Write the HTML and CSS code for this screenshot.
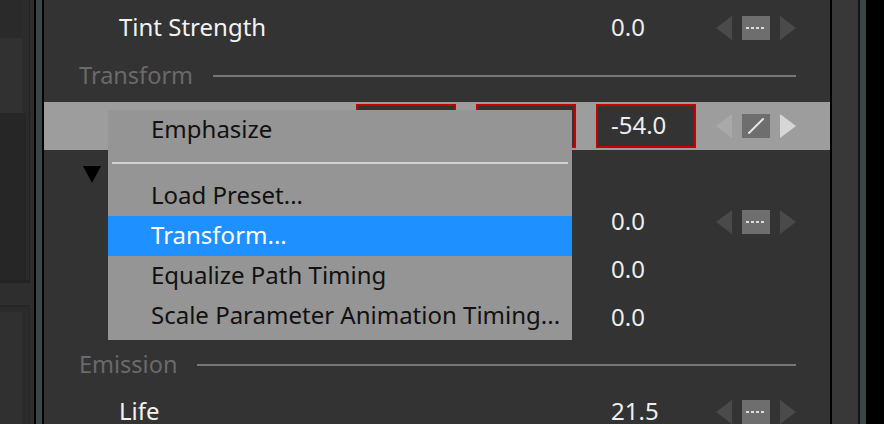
FILE: index.html
```html
<!DOCTYPE html>
<html>
<head>
<meta charset="utf-8">
<link rel="stylesheet" href="styles.css">
</head>
<body>
<div class="app">
  <div class="left-strip">
    <div class="ls-top">
      <div class="ls-top-inner">
        <div class="ls-cap"></div>
        <div class="ls-box"></div>
        <div class="ls-dark"></div>
      </div>
    </div>
    <div class="ls-gap"></div>
    <div class="ls-bottom">
      <div class="ls-bottom-inner"></div>
    </div>
  </div>
  <div class="sep-left"></div>
  <div class="panel">
    <div class="row">
      <div class="label">Tint Strength</div>
      <div class="field"></div>
      <div class="field"></div>
      <div class="field value">0.0</div>
      <div class="controls">
        <svg class="tri" width="16" height="24" viewBox="0 0 16 24"><path d="M16 0 L0 12 L16 24 Z" fill="#4a4a4a"/></svg>
        <div class="key"><svg width="28" height="24" viewBox="0 0 28 24"><path d="M4 12 H7 M9 12 H12 M14 12 H17 M19 12 H22" stroke="#dcdcdc" stroke-width="2"/></svg></div>
        <svg class="tri" width="16" height="24" viewBox="0 0 16 24"><path d="M0 0 L16 12 L0 24 Z" fill="#4a4a4a"/></svg>
      </div>
    </div>
    <div class="header"><span class="htext">Transform</span><span class="hline"></span></div>
    <div class="row hl">
      <div class="label"></div>
      <div class="field boxed"></div>
      <div class="field boxed"></div>
      <div class="field boxed value">-54.0</div>
      <div class="controls">
        <svg class="tri" width="16" height="24" viewBox="0 0 16 24"><path d="M16 0 L0 12 L16 24 Z" fill="#a9a9a9"/></svg>
        <div class="key"><svg width="28" height="24" viewBox="0 0 28 24"><path d="M7 19 L21 5" stroke="#e6e6e6" stroke-width="2" stroke-linecap="round"/></svg></div>
        <svg class="tri" width="16" height="24" viewBox="0 0 16 24"><path d="M0 0 L16 12 L0 24 Z" fill="#d6d6d6"/></svg>
      </div>
    </div>
    <div class="row">
      <div class="label twisty"><svg width="18" height="17" viewBox="0 0 18 17"><path d="M0 0 H18 L9 17 Z" fill="#000"/></svg></div>
    </div>
    <div class="row">
      <div class="label"></div>
      <div class="field"></div>
      <div class="field"></div>
      <div class="field value">0.0</div>
      <div class="controls">
        <svg class="tri" width="16" height="24" viewBox="0 0 16 24"><path d="M16 0 L0 12 L16 24 Z" fill="#4a4a4a"/></svg>
        <div class="key"><svg width="28" height="24" viewBox="0 0 28 24"><path d="M4 12 H7 M9 12 H12 M14 12 H17 M19 12 H22" stroke="#dcdcdc" stroke-width="2"/></svg></div>
        <svg class="tri" width="16" height="24" viewBox="0 0 16 24"><path d="M0 0 L16 12 L0 24 Z" fill="#4a4a4a"/></svg>
      </div>
    </div>
    <div class="row">
      <div class="label"></div>
      <div class="field"></div>
      <div class="field"></div>
      <div class="field value">0.0</div>
    </div>
    <div class="row">
      <div class="label"></div>
      <div class="field"></div>
      <div class="field"></div>
      <div class="field value">0.0</div>
    </div>
    <div class="header short"><span class="htext">Emission</span><span class="hline"></span></div>
    <div class="row">
      <div class="label">Life</div>
      <div class="field"></div>
      <div class="field"></div>
      <div class="field value">21.5</div>
      <div class="controls">
        <svg class="tri" width="16" height="24" viewBox="0 0 16 24"><path d="M16 0 L0 12 L16 24 Z" fill="#4a4a4a"/></svg>
        <div class="key"><svg width="28" height="24" viewBox="0 0 28 24"><path d="M4 12 H7 M9 12 H12 M14 12 H17 M19 12 H22" stroke="#dcdcdc" stroke-width="2"/></svg></div>
        <svg class="tri" width="16" height="24" viewBox="0 0 16 24"><path d="M0 0 L16 12 L0 24 Z" fill="#4a4a4a"/></svg>
      </div>
    </div>

    <div class="menu">
      <div class="item">Emphasize</div>
      <div class="msep"><div class="msep-line"></div></div>
      <div class="item">Load Preset...</div>
      <div class="item active">Transform...</div>
      <div class="item">Equalize Path Timing</div>
      <div class="item">Scale Parameter Animation Timing...</div>
    </div>
  </div>
  <div class="sep-right"></div>
  <div class="edge"></div>
</div>
</body>
</html>
```
FILE: styles.css
```css
html, body {
  margin: 0;
  padding: 0;
  background: #000;
}
body {
  width: 884px;
  height: 424px;
  overflow: hidden;
  font-family: "Noto Sans", "DejaVu Sans", sans-serif;
}
.app {
  display: flex;
  height: 424px;
}
.left-strip {
  width: 34px;
  flex: none;
  background: #2e2e2e;
  display: flex;
  flex-direction: column;
}
.ls-top {
  width: 30px;
  height: 283px;
  box-sizing: border-box;
  border-right: 1px solid #232323;
  border-bottom: 3px solid #232323;
  background: #2b2b2b;
  flex: none;
}
.ls-top-inner {
  width: 26px;
  height: 100%;
  box-sizing: border-box;
  border-right: 3px solid #2c2c2c;
  display: flex;
  flex-direction: column;
}
.ls-cap {
  height: 38px;
  background: #2a2a2a;
}
.ls-box {
  height: 75px;
  width: 22px;
  background: #313131;
}
.ls-dark {
  flex: 1;
  background: #262626;
  width: 26px;
}
.ls-gap {
  height: 22px;
}
.ls-bottom {
  flex: 1;
  width: 30px;
  box-sizing: border-box;
  border-top: 2px solid #262626;
  border-right: 1px solid #262626;
  padding-top: 5px;
  background: #2b2b2b;
}
.ls-bottom-inner {
  width: 22px;
  height: 100%;
  background: #303030;
  border-right: 4px solid #2a2a2a;
}
.sep-left {
  width: 6px;
  flex: none;
  background: #3a4545;
  border-left: 2px solid #000;
  border-right: 2px solid #000;
}
.panel {
  width: 786px;
  flex: none;
  background: #333333;
  position: relative;
  padding-top: 4px;
  box-sizing: border-box;
}
.sep-right {
  width: 26px;
  flex: none;
  background: #383838;
  border-left: 2px solid #000;
  border-right: 2px solid #151515;
}
.edge {
  width: 6px;
  flex: none;
  background: #3a4545;
}
.row {
  height: 48px;
  display: grid;
  grid-template-columns: 292px 100px 100px 100px 80px;
  column-gap: 20px;
  align-items: center;
  font-size: 24px;
  color: #f2f2f2;
}
.label {
  padding-left: 75px;
  padding-bottom: 3px;
  white-space: nowrap;
}
.twisty {
  padding-left: 39px;
  padding-bottom: 0;
  display: flex;
  align-items: center;
  padding-top: 1px;
}
.field {
  height: 44px;
  box-sizing: border-box;
  border: 2px solid transparent;
  padding-left: 13px;
  padding-bottom: 3px;
  display: flex;
  align-items: center;
  color: #eeeeee;
}
.boxed {
  border-color: #c80000;
  background: #333333;
}
.controls {
  display: flex;
  align-items: center;
  gap: 10px;
  height: 24px;
}
.tri {
  display: block;
}
.key {
  width: 28px;
  height: 24px;
  background: #6e6e6e;
}
.key svg {
  display: block;
}
.hl {
  background: #9d9d9d;
  margin-top: 2px;
}
.header {
  height: 48px;
  box-sizing: border-box;
  display: flex;
  align-items: center;
  padding-left: 35px;
  padding-right: 34px;
  font-size: 23.5px;
  color: #6a6a6a;
}
.htext {
  padding-bottom: 2px;
}
.header.short {
  height: 46px;
}
.hline {
  flex: 1;
  height: 2px;
  background: #777777;
  margin-left: 20px;
}
.menu {
  position: absolute;
  left: 64px;
  top: 110px;
  width: 464px;
  height: 230px;
  background: #959595;
  font-size: 24px;
  color: #111111;
}
.item {
  height: 40px;
  box-sizing: border-box;
  padding-left: 43px;
  padding-bottom: 3px;
  display: flex;
  align-items: center;
  white-space: nowrap;
}
.item.active {
  background: #1e90ff;
  color: #ffffff;
}
.msep {
  height: 26px;
  padding: 0 4px;
  display: flex;
  align-items: center;
}
.msep-line {
  flex: 1;
  height: 2px;
  background: #d2d2d2;
}
```
